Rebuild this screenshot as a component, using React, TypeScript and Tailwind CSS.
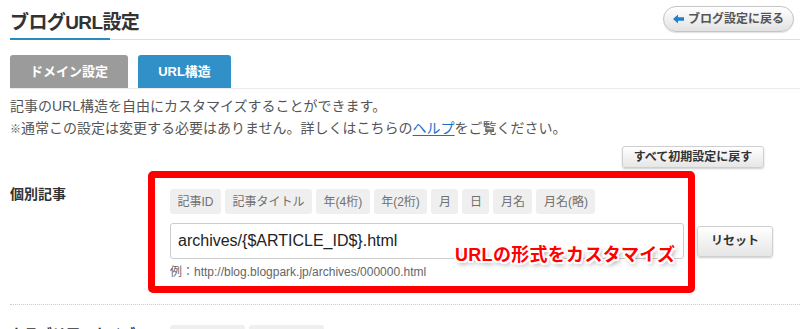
import React from "react";

const chips1 = ["記事ID", "記事タイトル", "年(4桁)", "年(2桁)", "月", "日", "月名", "月名(略)"];
const chips2 = ["カテゴリID", "カテゴリ名"];

function Chip({ label }: { label: string }) {
  return (
    <span className="h-[25px] px-[7.5px] flex items-center rounded-[3px] bg-[#efefef] text-[12px] text-[#707070] leading-none whitespace-nowrap">
      {label}
    </span>
  );
}

export default function App() {
  return (
    <div className="relative w-[804px] h-[329px] overflow-hidden bg-white [font-family:'Liberation_Sans','Noto_Sans_CJK_JP',sans-serif] text-[#555]">
      <div className="ml-[10px] w-[790px]">
        {/* header */}
        <div className="flex justify-between items-start h-[38px]">
          <h1 className="mt-[11px] text-[19px] leading-[24px] font-bold text-[#333] tracking-[-0.6px]">
            ブログURL設定
          </h1>
          <button className="mt-[6px] mr-[6px] h-[26px] px-[9px] flex items-center gap-[4px] rounded-full border border-[#c4c4c4] bg-gradient-to-b from-[#ffffff] to-[#e2e2e2] shadow-[0_1px_1px_rgba(0,0,0,0.12)] text-[12px] font-bold text-[#555] leading-none">
            <svg width="11" height="10" viewBox="0 0 11 10">
              <path d="M0 5 L5 0.5 L5 3.2 L11 3.2 L11 6.8 L5 6.8 L5 9.5 Z" fill="#1f7fcf" />
            </svg>
            ブログ設定に戻る
          </button>
        </div>
        <div className="flex items-end h-[2px]">
          <div className="w-[100px] h-[2px] bg-[#2a8ac4]" />
          <div className="flex-1 h-px bg-[#dddddd]" />
        </div>

        {/* tabs */}
        <div className="mt-[15px] flex gap-[10px] border-b border-[#ebebeb]">
          <div className="h-[33px] w-[118px] flex items-center justify-center rounded-t-[3px] bg-[#9b9b9b] text-white text-[13px] font-bold">
            ドメイン設定
          </div>
          <div className="h-[33px] w-[93px] flex items-center justify-center rounded-t-[3px] bg-[#3190c8] text-white text-[13px] font-bold">
            URL構造
          </div>
        </div>

        {/* description */}
        <div className="mt-[6px] text-[14px] leading-[22px] text-[#555]">
          <p>記事のURL構造を自由にカスタマイズすることができます。</p>
          <p>
            <span className="text-[11px]">※</span>通常この設定は変更する必要はありません。詳しくはこちらの
            <a className="text-[#1a6fc9] underline underline-offset-2">ヘルプ</a>
            をご覧ください。
          </p>
        </div>

        <div className="mt-[6px] flex justify-end pr-[36px]">
          <button className="h-[22px] w-[142px] flex items-center justify-center rounded-[3px] border border-[#cfcfcf] bg-gradient-to-b from-[#ffffff] to-[#e6e6e6] shadow-[0_1px_2px_rgba(0,0,0,0.2)] text-[12px] font-bold text-[#333] leading-none">
            すべて初期設定に戻す
          </button>
        </div>

        {/* row 1 */}
        <div className="mt-[16px] flex border-b border-dotted border-[#cccccc] pb-[24px]">
          <div className="w-[160px] text-[14px] leading-[20px] font-bold text-[#333]">個別記事</div>
          <div className="mt-[5px] flex flex-col">
            <div className="flex gap-[4px]">
              {chips1.map((c) => (
                <Chip key={c} label={c} />
              ))}
            </div>
            <div className="mt-[9px] flex items-center gap-[13px]">
              <div className="w-[514px] h-[36px] flex items-center px-[7px] rounded-[3px] border border-[#cccccc] bg-white text-[16px] text-[#222]">
                archives/{"{$ARTICLE_ID$}"}.html
              </div>
              <button className="h-[31px] w-[76px] flex items-center justify-center rounded-[3px] border border-[#d0d0d0] bg-gradient-to-b from-[#ffffff] to-[#e6e6e6] shadow-[0_1px_2px_rgba(0,0,0,0.2)] text-[12px] font-bold text-[#333] leading-none">
                リセット
              </button>
            </div>
            <div className="mt-[5px] text-[12px] leading-[16px] text-[#666]">
              例：http://blog.blogpark.jp/archives/000000.html
            </div>
          </div>
        </div>

        {/* row 2 */}
        <div className="mt-[19px] flex">
          <div className="w-[160px] text-[14px] leading-[20px] font-bold text-[#333]">カテゴリアーカイブ</div>
          <div className="mt-[1px] flex gap-[4px]">
            {chips2.map((c) => (
              <Chip key={c} label={c} />
            ))}
          </div>
        </div>
      </div>

      {/* annotation overlay */}
      <div className="absolute left-[148px] top-[171px] w-[547px] h-[122px] border-[7px] border-[#ff0000] rounded-[5px] pointer-events-none" />
      <div className="absolute left-[455px] top-[245px] text-[18px] leading-[20px] font-bold text-[#ff0000] whitespace-nowrap tracking-[0.3px] [text-shadow:0_0_2px_#fff,1.5px_1.5px_0_#fff,-1.5px_-1.5px_0_#fff,1.5px_-1.5px_0_#fff,-1.5px_1.5px_0_#fff,0_2px_0_#fff,0_-2px_0_#fff,2px_0_0_#fff,-2px_0_0_#fff,2px_3px_5px_rgba(0,0,0,0.45)]">
        URLの形式をカスタマイズ
      </div>
    </div>
  );
}
